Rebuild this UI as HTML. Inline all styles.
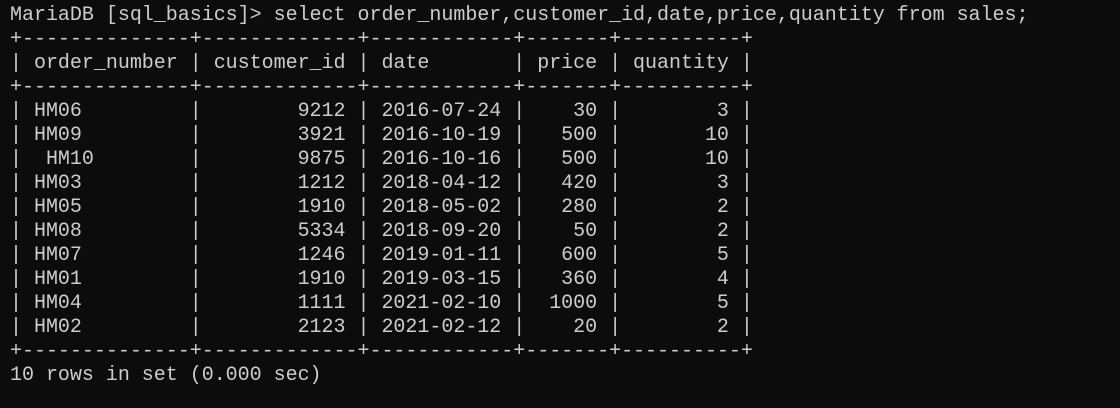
<!DOCTYPE html>
<html><head><style>
html,body{margin:0;background:#0c0c0c;width:1120px;height:408px;overflow:hidden}
pre{margin:0;padding:4px 0 0 10px;font-family:"Liberation Mono",monospace;font-size:20px;line-height:24px;color:#cccccc;letter-spacing:-0.02px}
</style></head><body><pre>MariaDB [sql_basics]&gt; select order_number,customer_id,date,price,quantity from sales;
+--------------+-------------+------------+-------+----------+
| order_number | customer_id | date       | price | quantity |
+--------------+-------------+------------+-------+----------+
| HM06         |        9212 | 2016-07-24 |    30 |        3 |
| HM09         |        3921 | 2016-10-19 |   500 |       10 |
|  HM10        |        9875 | 2016-10-16 |   500 |       10 |
| HM03         |        1212 | 2018-04-12 |   420 |        3 |
| HM05         |        1910 | 2018-05-02 |   280 |        2 |
| HM08         |        5334 | 2018-09-20 |    50 |        2 |
| HM07         |        1246 | 2019-01-11 |   600 |        5 |
| HM01         |        1910 | 2019-03-15 |   360 |        4 |
| HM04         |        1111 | 2021-02-10 |  1000 |        5 |
| HM02         |        2123 | 2021-02-12 |    20 |        2 |
+--------------+-------------+------------+-------+----------+
10 rows in set (0.000 sec)
</pre></body></html>
